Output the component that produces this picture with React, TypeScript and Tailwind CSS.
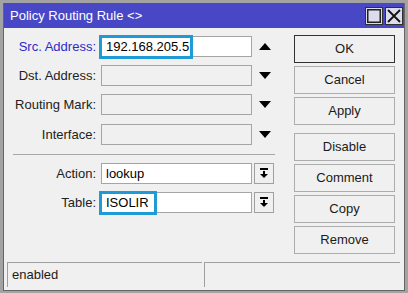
import React from "react";

const font = { fontFamily: '"Liberation Sans", Arial, sans-serif' };

function UpArrow() {
  return (
    <svg width="12" height="7" viewBox="0 0 12 7" className="ml-[7px]">
      <polygon points="0,7 12,7 6,0" fill="#000" />
    </svg>
  );
}

function DownArrow() {
  return (
    <svg width="12" height="7" viewBox="0 0 12 7" className="ml-[7px]">
      <polygon points="0,0 12,0 6,7" fill="#000" />
    </svg>
  );
}

function DropButton() {
  return (
    <div className="ml-[2px] flex h-[21px] w-[20px] items-center justify-center border border-[#a0a0a0] bg-[#f0f0f0]">
      <svg width="10" height="11" viewBox="0 0 10 11">
        <rect x="1" y="0" width="8" height="2" fill="#000" />
        <rect x="4" y="3" width="2" height="3" fill="#000" />
        <polygon points="1,6 9,6 5,10" fill="#000" />
      </svg>
    </div>
  );
}

function Row({
  label,
  value,
  blue,
  highlight,
  trailing,
  filled,
}: {
  label: string;
  value?: string;
  blue?: boolean;
  highlight?: number;
  trailing: React.ReactNode;
  filled?: boolean;
}) {
  return (
    <div className="flex h-[21px] items-center">
      <div className={`w-[92px] text-right ${blue ? "text-[#2b2bc8]" : "text-[#222]"}`}>{label}</div>
      <div
        className={`relative ml-[5px] h-[21px] w-[151px] border border-[#a5a5a5] ${
          filled ? "bg-white" : "bg-[#f0f0f0]"
        }`}
      >
        {value && <div className="pl-[4px] leading-[19px] text-black">{value}</div>}
        {highlight && (
          <div
            className="absolute left-[-3px] top-[-2px] h-[24px] border-[3px] border-[#1e9ad6]"
            style={{ width: highlight }}
          />
        )}
      </div>
      {trailing}
    </div>
  );
}

function Btn({ label, primary, className = "" }: { label: string; primary?: boolean; className?: string }) {
  return (
    <div
      className={`flex h-[28px] w-[101px] items-center justify-center border bg-[#f0f0f0] text-[#1a1a1a] ${
        primary ? "border-[#333]" : "border-[#adadad]"
      } ${className}`}
    >
      {label}
    </div>
  );
}

export default function App() {
  return (
    <div className="h-[293px] w-[408px] bg-[#a3a3a3] px-[3px] pt-[3px] pb-[2px] text-[13px]" style={font}>
      <div className="flex h-full flex-col border-x border-b border-[#666]">
        {/* title bar */}
        <div className="flex h-[25px] items-center bg-[#4848c6] pl-[6px] pr-[1px] text-white">
          <span className="flex-1">Policy Routing Rule &lt;&gt;</span>
          <div className="flex items-center gap-[2px]">
            <div className="flex h-[18px] w-[18px] items-center justify-center border border-[#303030] bg-[#dcdcec]">
              <svg width="14" height="14" viewBox="0 0 14 14">
                <rect x="0.75" y="0.75" width="12.5" height="12.5" fill="none" stroke="#202020" strokeWidth="1.5" />
              </svg>
            </div>
            <div className="flex h-[18px] w-[18px] items-center justify-center border border-[#303030] bg-[#dcdcec]">
              <svg width="14" height="14" viewBox="0 0 14 14">
                <path d="M1 1 L13 13 M13 1 L1 13" stroke="#111" strokeWidth="1.8" />
              </svg>
            </div>
          </div>
        </div>

        {/* body */}
        <div className="flex flex-1 flex-col bg-[#f0f0f0]">
          <div className="flex flex-1">
            <div className="flex w-[290px] flex-col pt-[8px]">
              <Row label="Src. Address:" value="192.168.205.5" blue filled highlight={94} trailing={<UpArrow />} />
              <div className="mt-[8px]">
                <Row label="Dst. Address:" trailing={<DownArrow />} />
              </div>
              <div className="mt-[8px]">
                <Row label="Routing Mark:" trailing={<DownArrow />} />
              </div>
              <div className="mt-[9px]">
                <Row label="Interface:" trailing={<DownArrow />} />
              </div>
              <div className="ml-[9px] mt-[9px] w-[262px] border-t border-[#a8a8a8]" />
              <div className="mt-[8px]">
                <Row label="Action:" value="lookup" filled trailing={<DropButton />} />
              </div>
              <div className="mt-[8px]">
                <Row label="Table:" value="ISOLIR" filled highlight={58} trailing={<DropButton />} />
              </div>
            </div>
            <div className="flex flex-col pt-[7px]">
              <Btn label="OK" primary />
              <Btn label="Cancel" className="mt-[3px]" />
              <Btn label="Apply" className="mt-[3px]" />
              <Btn label="Disable" className="mt-[8px]" />
              <Btn label="Comment" className="mt-[3px]" />
              <Btn label="Copy" className="mt-[3px]" />
              <Btn label="Remove" className="mt-[3px]" />
            </div>
          </div>

          {/* status bar */}
          <div className="mb-[3px] ml-[3px] mr-[4px] flex h-[25px] text-[#1a1a1a]">
            <div className="flex w-[195px] items-center border-l border-t border-[#a0a0a0] pl-[4px]">enabled</div>
            <div className="ml-[2px] flex-1 border-l border-t border-[#a0a0a0]" />
          </div>
        </div>
      </div>
    </div>
  );
}
